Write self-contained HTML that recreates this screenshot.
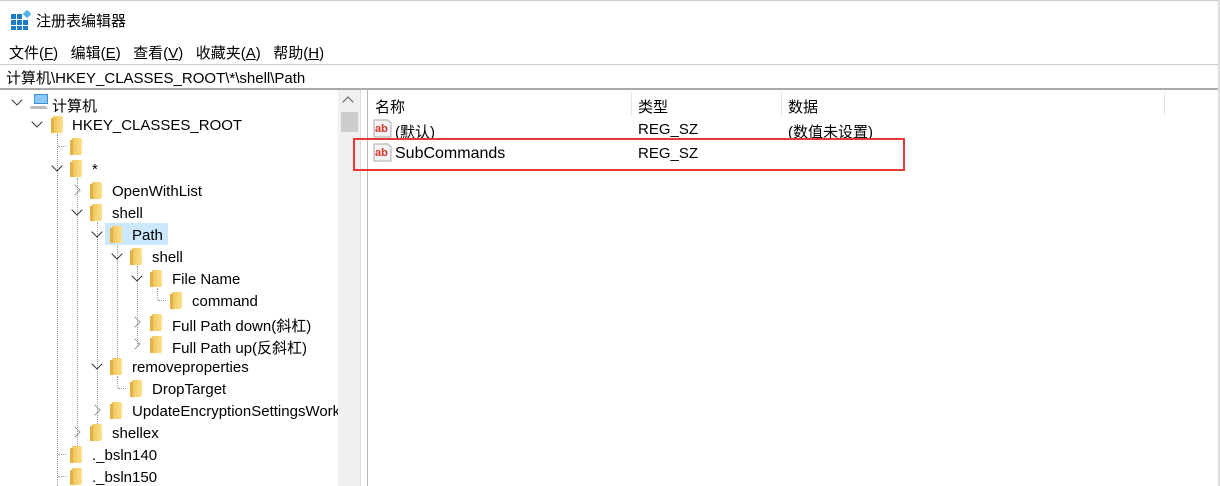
<!DOCTYPE html>
<html><head><meta charset="utf-8"><style>
*{margin:0;padding:0;box-sizing:border-box}
body{width:1220px;height:486px;overflow:hidden;background:#fff;font-family:"Liberation Sans","Noto Sans CJK SC",sans-serif;font-size:14px;color:#000;position:relative}
.a{position:absolute;white-space:nowrap}
.f{position:absolute;width:10px;height:17px;background:linear-gradient(90deg,#f0c45a,#fde08a);border-radius:1px 2px 2px 1px}
.f:before{content:"";position:absolute;left:-2px;top:2px;width:3px;height:15px;background:#e2b043}
.cd,.cr{position:absolute;width:8px;height:8px;border-right:1.7px solid #333;border-bottom:1.7px solid #333}
.cd{transform:rotate(45deg)}
.cr{transform:rotate(-45deg);border-color:#999}
.t{position:absolute;font-size:15px;margin-top:2px}
.vd{position:absolute;border-left:1px dotted #999;width:0}
.hd{position:absolute;border-top:1px dotted #999;height:0}
</style></head><body>
<div class="a" style="left:0;top:0;width:1220px;height:1px;background:#ccc"></div>
<svg class="a" style="left:11px;top:10px" width="20" height="20"><g fill="#1b7bc4"><rect x="0" y="4" width="5" height="5"/><rect x="6" y="4" width="5" height="5"/><rect x="0" y="10" width="5" height="5"/><rect x="6" y="10" width="5" height="5"/><rect x="12" y="10" width="5" height="5"/><rect x="0" y="16" width="5" height="4"/><rect x="6" y="16" width="5" height="4"/><rect x="12" y="16" width="5" height="4"/></g><rect x="13" y="1" width="6" height="6" fill="#4fb3ea" transform="rotate(45 16 4)"/></svg>
<div class="a" style="left:36px;top:10px;font-size:15px">注册表编辑器</div>
<div class="a" style="left:9px;top:42px;font-size:15px">文件(<u>F</u>)&nbsp;&nbsp;&nbsp;编辑(<u>E</u>)&nbsp;&nbsp;&nbsp;查看(<u>V</u>)&nbsp;&nbsp;&nbsp;收藏夹(<u>A</u>)&nbsp;&nbsp;&nbsp;帮助(<u>H</u>)</div>
<div class="a" style="left:0;top:64px;width:1220px;height:1px;background:#ccc"></div>
<div class="a" style="left:6px;top:67px;font-size:15px">计算机\HKEY_CLASSES_ROOT\*\shell\Path</div>
<div class="a" style="left:0;top:88px;width:1220px;height:2px;background:#aaa"></div>
<div class="a" style="left:338px;top:90px;width:22px;height:396px;background:#f0f0f0"></div>
<div class="a" style="left:344px;top:98px;width:8px;height:8px;border-left:1.6px solid #555;border-top:1.6px solid #555;transform:rotate(45deg)"></div>
<div class="a" style="left:341px;top:112px;width:17px;height:20px;background:#cdcdcd"></div>
<div class="a" style="left:360px;top:90px;width:8px;height:396px;background:#fff;border-left:1px solid #ddd;border-right:1px solid #bbb"></div>
<div class="vd" style="left:57px;top:134px;height:352px"></div>
<div class="hd" style="left:58px;top:146px;width:8px"></div>
<div class="vd" style="left:77px;top:178px;height:268px"></div>
<div class="vd" style="left:97px;top:222px;height:210px"></div>
<div class="vd" style="left:117px;top:244px;height:114px"></div>
<div class="vd" style="left:137px;top:266px;height:80px"></div>
<div class="vd" style="left:157px;top:288px;height:12px"></div>
<div class="hd" style="left:158px;top:300px;width:8px"></div>
<div class="vd" style="left:117px;top:376px;height:12px"></div>
<div class="hd" style="left:118px;top:388px;width:8px"></div>
<div class="hd" style="left:58px;top:454px;width:8px"></div>
<div class="hd" style="left:58px;top:476px;width:8px"></div>
<div class="a" style="left:105px;top:223px;width:63px;height:22px;background:#cce8ff"></div>
<div class="cd" style="left:13px;top:96px"></div>
<svg class="a" style="left:30px;top:94px" width="20" height="16"><rect x="4" y="0" width="14" height="10" fill="#3a8fd6"/><rect x="5" y="1" width="12" height="8" fill="#8cc8f4"/><path d="M1 12h15l2 3H0z" fill="#bbb"/></svg>
<div class="t" style="left:52px;top:93px">计算机</div>
<div class="cd" style="left:33px;top:118px"></div><div class="f" style="left:53px;top:116px"></div><div class="t" style="left:72px;top:115px">HKEY_CLASSES_ROOT</div>
<div class="f" style="left:72px;top:138px"></div>
<div class="cd" style="left:53px;top:162px"></div><div class="f" style="left:72px;top:160px"></div><div class="t" style="left:92px;top:159px">*</div>
<div class="cr" style="left:71px;top:186px"></div><div class="f" style="left:92px;top:182px"></div><div class="t" style="left:112px;top:181px">OpenWithList</div>
<div class="cd" style="left:73px;top:206px"></div><div class="f" style="left:92px;top:204px"></div><div class="t" style="left:112px;top:203px">shell</div>
<div class="cd" style="left:93px;top:228px"></div><div class="f" style="left:112px;top:226px"></div><div class="t" style="left:132px;top:225px">Path</div>
<div class="cd" style="left:113px;top:250px"></div><div class="f" style="left:132px;top:248px"></div><div class="t" style="left:152px;top:247px">shell</div>
<div class="cd" style="left:133px;top:272px"></div><div class="f" style="left:152px;top:270px"></div><div class="t" style="left:172px;top:269px">File Name</div>
<div class="f" style="left:172px;top:292px"></div><div class="t" style="left:192px;top:291px">command</div>
<div class="cr" style="left:131px;top:318px"></div><div class="f" style="left:152px;top:314px"></div><div class="t" style="left:172px;top:313px">Full Path down(斜杠)</div>
<div class="cr" style="left:131px;top:340px"></div><div class="f" style="left:152px;top:336px"></div><div class="t" style="left:172px;top:335px">Full Path up(反斜杠)</div>
<div class="cd" style="left:93px;top:360px"></div><div class="f" style="left:112px;top:358px"></div><div class="t" style="left:132px;top:357px">removeproperties</div>
<div class="f" style="left:132px;top:380px"></div><div class="t" style="left:152px;top:379px">DropTarget</div>
<div class="cr" style="left:91px;top:406px"></div><div class="f" style="left:112px;top:402px"></div><div class="a" style="left:132px;top:403px;width:206px;overflow:hidden;font-size:15px">UpdateEncryptionSettingsWork</div>
<div class="cr" style="left:71px;top:428px"></div><div class="f" style="left:92px;top:424px"></div><div class="t" style="left:112px;top:423px">shellex</div>
<div class="f" style="left:72px;top:446px"></div><div class="t" style="left:92px;top:445px">._bsln140</div>
<div class="f" style="left:72px;top:468px"></div><div class="t" style="left:92px;top:467px">._bsln150</div>
<div class="a" style="left:631px;top:92px;width:1px;height:24px;background:#e5e5e5"></div>
<div class="a" style="left:781px;top:92px;width:1px;height:24px;background:#e5e5e5"></div>
<div class="a" style="left:1164px;top:92px;width:1px;height:24px;background:#e5e5e5"></div>
<div class="t" style="left:375px;top:94px">名称</div>
<div class="t" style="left:638px;top:94px">类型</div>
<div class="t" style="left:788px;top:94px">数据</div>
<svg class="a" style="left:373px;top:119px" width="20" height="20"><path d="M1 1h14l3 3v14H1z" fill="#f4f4f4" stroke="#aaa"/><text x="2" y="13" font-family="Liberation Sans" font-weight="bold" font-size="11" fill="#d9322b">ab</text></svg>
<div class="t" style="left:395px;top:119px">(默认)</div>
<div class="t" style="left:638px;top:119px">REG_SZ</div>
<div class="t" style="left:788px;top:119px">(数值未设置)</div>
<svg class="a" style="left:373px;top:143px" width="20" height="20"><path d="M1 1h14l3 3v14H1z" fill="#f4f4f4" stroke="#aaa"/><text x="2" y="13" font-family="Liberation Sans" font-weight="bold" font-size="11" fill="#d9322b">ab</text></svg>
<div class="t" style="left:395px;top:143px;font-size:16px">SubCommands</div>
<div class="t" style="left:638px;top:143px">REG_SZ</div>
<div class="a" style="left:353px;top:138px;width:552px;height:33px;border:2px solid #e8393a"></div>
<div class="a" style="left:1218px;top:0;width:2px;height:486px;background:#ddd"></div>
</body></html>
